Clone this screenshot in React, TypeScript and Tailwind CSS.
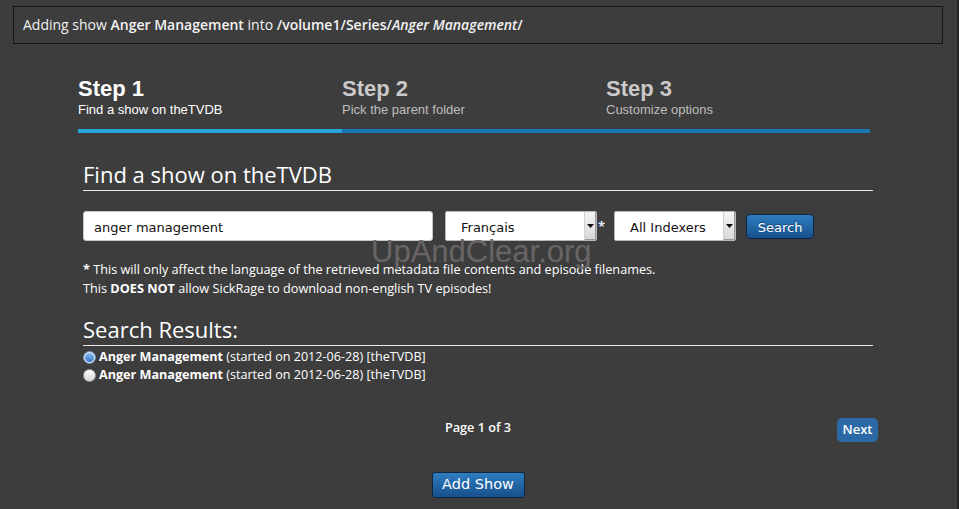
import React from "react";

const open = "font-['Open_Sans',sans-serif]";
const arial = "font-['Liberation_Sans',Arial,sans-serif]";
const dejavu = "font-['DejaVu_Sans',Verdana,sans-serif]";

function SelectBox({ label, width }: { label: string; width: string }) {
  return (
    <div
      className={`relative flex h-[30px] ${width} items-center rounded-[2px] border border-[#b8b8b8] bg-white pl-[15px] ${dejavu} text-[13px] text-[#111]`}
    >
      <span className="flex-1 pt-[3px]">{label}</span>
      <div className="flex h-full w-[12px] items-center justify-center border-l border-[#d0d0d0] bg-gradient-to-b from-[#f4f4f4] to-[#d8d8d8] shadow-[inset_-1px_-1px_0_#9a9a9a]">
        <svg width="7" height="4" viewBox="0 0 7 4">
          <path d="M0 0h7L3.5 4z" fill="#111" />
        </svg>
      </div>
    </div>
  );
}

function Radio({ checked }: { checked: boolean }) {
  return checked ? (
    <span className="mr-[3px] inline-flex h-[13px] w-[13px] items-center justify-center rounded-full border border-[#6a8fb8] bg-[#dde6f0]">
      <span className="h-[9px] w-[9px] rounded-full bg-gradient-to-b from-[#8fc0f0] to-[#2f74c8]" />
    </span>
  ) : (
    <span className="mr-[3px] inline-block h-[13px] w-[13px] rounded-full border border-[#a0a0a0] bg-gradient-to-b from-[#ffffff] to-[#d6d6d6]" />
  );
}

export default function App() {
  return (
    <div className="relative min-h-[509px] w-full border-r-[2px] border-[#262626] bg-[#3d3d3d] pt-[6px] text-white">
      {/* top info box */}
      <div
        className={`ml-[13px] flex h-[38px] w-[930px] items-center border border-[#151515] pl-[9px] ${open} text-[14px] text-[#f2f2f2]`}
      >
        <span className="-mt-[1px]">
          Adding show <b className="font-semibold">Anger Management</b> into{" "}
          <b className="font-semibold">
            /volume1/Series/<i>Anger Management</i>/
          </b>
        </span>
      </div>

      {/* steps */}
      <div className={`ml-[78px] mt-[32px] flex w-[792px] ${arial}`}>
        {[
          { t: "Step 1", s: "Find a show on theTVDB", active: true },
          { t: "Step 2", s: "Pick the parent folder", active: false },
          { t: "Step 3", s: "Customize options", active: false },
        ].map((st) => (
          <div key={st.t} className="flex w-[264px] flex-col">
            <div
              className={`text-[22px] font-bold leading-[26px] ${st.active ? "text-white" : "text-[#c9c9c9]"}`}
            >
              {st.t}
            </div>
            <div
              className={`text-[13px] leading-[16px] ${st.active ? "text-white" : "text-[#bdbdbd]"}`}
            >
              {st.s}
            </div>
            <div
              className={`mt-[11px] h-[4px] ${st.active ? "bg-[#27a6dc]" : "bg-[#1b76b3]"}`}
            />
          </div>
        ))}
      </div>

      {/* form */}
      <div className={`ml-[83px] w-[790px] ${open}`}>
        <h2 className="mt-[26px] border-b border-[#e8e8e8] pb-[1px] text-[22px] font-normal leading-[30px]">
          Find a show on theTVDB
        </h2>

        <div className="mt-[20px] flex items-center">
          <div
            className={`flex h-[30px] w-[350px] items-center rounded-[3px] border border-[#c8c8c8] bg-white pl-[10px] pt-[3px] ${dejavu} text-[13px] text-[#111]`}
          >
            anger management
          </div>
          <div className="ml-[12px]">
            <SelectBox label="Français" width="w-[152px]" />
          </div>
          <span className="ml-[1px] self-start pt-[6px] text-[13px] font-bold text-[#dfe8ff]">*</span>
          <div className="ml-[9px]">
            <SelectBox label="All Indexers" width="w-[122px]" />
          </div>
          <button
            className={`ml-[10px] mt-[1px] flex h-[25px] w-[68px] items-center justify-center rounded-[4px] border border-[#0d2744] bg-gradient-to-b from-[#2f7dc0] to-[#17508c] pt-[2px] ${dejavu} text-[13px] text-white [text-shadow:0_-1px_0_rgba(0,0,0,0.3)]`}
          >
            Search
          </button>
        </div>

        <div className="mt-[19px] text-[12.7px] leading-[19px]">
          <div>
            <b className="font-bold">*</b> This will only affect the language of the retrieved metadata file contents and
            episode filenames.
          </div>
          <div>
            This <b className="font-bold">DOES NOT</b> allow SickRage to download non-english TV episodes!
          </div>
        </div>

        <h2 className="mt-[16px] border-b border-[#e8e8e8] pb-[1px] text-[22px] font-normal leading-[30px]">
          Search Results:
        </h2>

        <div className="mt-[2px] text-[12.6px] leading-[18px]">
          {[true, false].map((c, i) => (
            <div key={i} className="flex items-center">
              <Radio checked={c} />
              <span>
                <b className="font-bold">Anger Management</b> (started on 2012-06-28) [theTVDB]
              </span>
            </div>
          ))}
        </div>

        <div className="mt-[34px] grid grid-cols-[1fr_auto_1fr] items-start">
          <div />
          <div className="text-[12.7px] font-semibold leading-[18px]">Page 1 of 3</div>
          <div className="flex justify-end">
            <button className="-mr-[5px] flex h-[24px] w-[41px] items-center justify-center rounded-[5px] bg-[#2b69a6] text-[13px] font-semibold text-white">
              Next
            </button>
          </div>
        </div>

        <div className="mt-[30px] flex justify-center">
          <button
            className={`flex h-[26px] w-[93px] items-center justify-center rounded-[3px] border border-[#0d2744] bg-gradient-to-b from-[#2f7dc0] to-[#17508c] ${dejavu} text-[14.5px] text-white`}
          >
            Add Show
          </button>
        </div>
      </div>

      {/* watermark */}
      <div
        className={`pointer-events-none absolute left-[371px] top-[235px] ${arial} text-[31px] leading-[34px] text-[#6a6565]`}
      >
        UpAndClear.org
      </div>
    </div>
  );
}
